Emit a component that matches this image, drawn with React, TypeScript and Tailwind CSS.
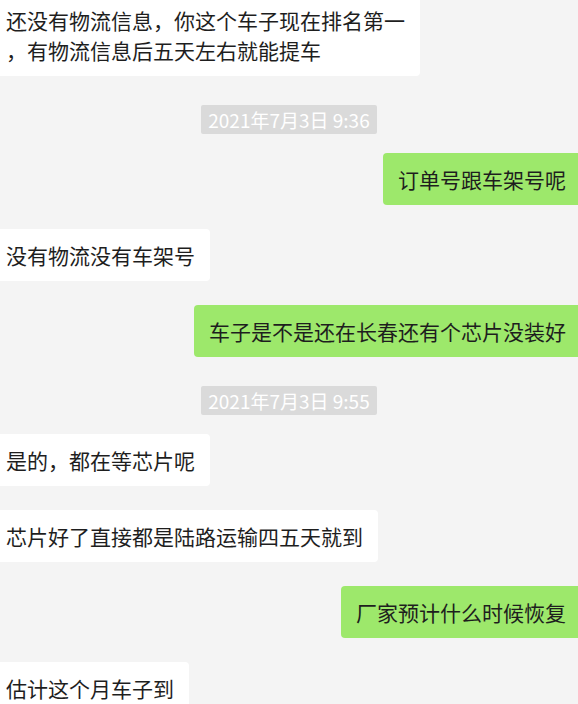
type Msg =
  | { kind: 'time'; text: string }
  | { kind: 'in' | 'out'; lines: string[] };

const messages: Msg[] = [
  { kind: 'in', lines: ['还没有物流信息，你这个车子现在排名第一', '，有物流信息后五天左右就能提车'] },
  { kind: 'time', text: '2021年7月3日 9:36' },
  { kind: 'out', lines: ['订单号跟车架号呢'] },
  { kind: 'in', lines: ['没有物流没有车架号'] },
  { kind: 'out', lines: ['车子是不是还在长春还有个芯片没装好'] },
  { kind: 'time', text: '2021年7月3日 9:55' },
  { kind: 'in', lines: ['是的，都在等芯片呢'] },
  { kind: 'in', lines: ['芯片好了直接都是陆路运输四五天就到'] },
  { kind: 'out', lines: ['厂家预计什么时候恢复'] },
  { kind: 'in', lines: ['估计这个月车子到'] },
];

function Bubble({ side, lines }: { side: 'in' | 'out'; lines: string[] }) {
  const isOut = side === 'out';
  return (
    <div className={`flex ${isOut ? 'justify-end' : 'justify-start'}`}>
      <div
        className={`whitespace-nowrap text-[21px] leading-[30px] py-[11px] text-[#1e1e1e] ${
          isOut
            ? 'bg-[#9de86b] pl-[15px] pr-[12px] rounded-l-[4px]'
            : 'bg-white pl-[6px] pr-[15px] rounded-r-[4px]'
        }`}
      >
        {lines.map((l, i) => (
          <div key={i}>{l}</div>
        ))}
      </div>
    </div>
  );
}

export default function App() {
  return (
    <div
      className="w-[578px] h-[704px] overflow-hidden bg-[#f4f4f4]"
      style={{ fontFamily: '"Noto Sans CJK SC", "Noto Sans", sans-serif' }}
    >
      <div className="flex flex-col -mt-[6px]">
        {messages.map((m, i) => {
          const prev = messages[i - 1];
          if (m.kind === 'time') {
            return (
              <div key={i} className="flex justify-center mt-[29px] mb-[19px]">
                <div className="bg-[#dadada] text-white text-[19px] leading-[29px] h-[29px] px-[7px] rounded-[2px]">
                  {m.text}
                </div>
              </div>
            );
          }
          const top = i === 0 || (prev && prev.kind === 'time') ? 'mt-0' : 'mt-[24px]';
          return (
            <div key={i} className={top}>
              <Bubble side={m.kind} lines={m.lines} />
            </div>
          );
        })}
      </div>
    </div>
  );
}
